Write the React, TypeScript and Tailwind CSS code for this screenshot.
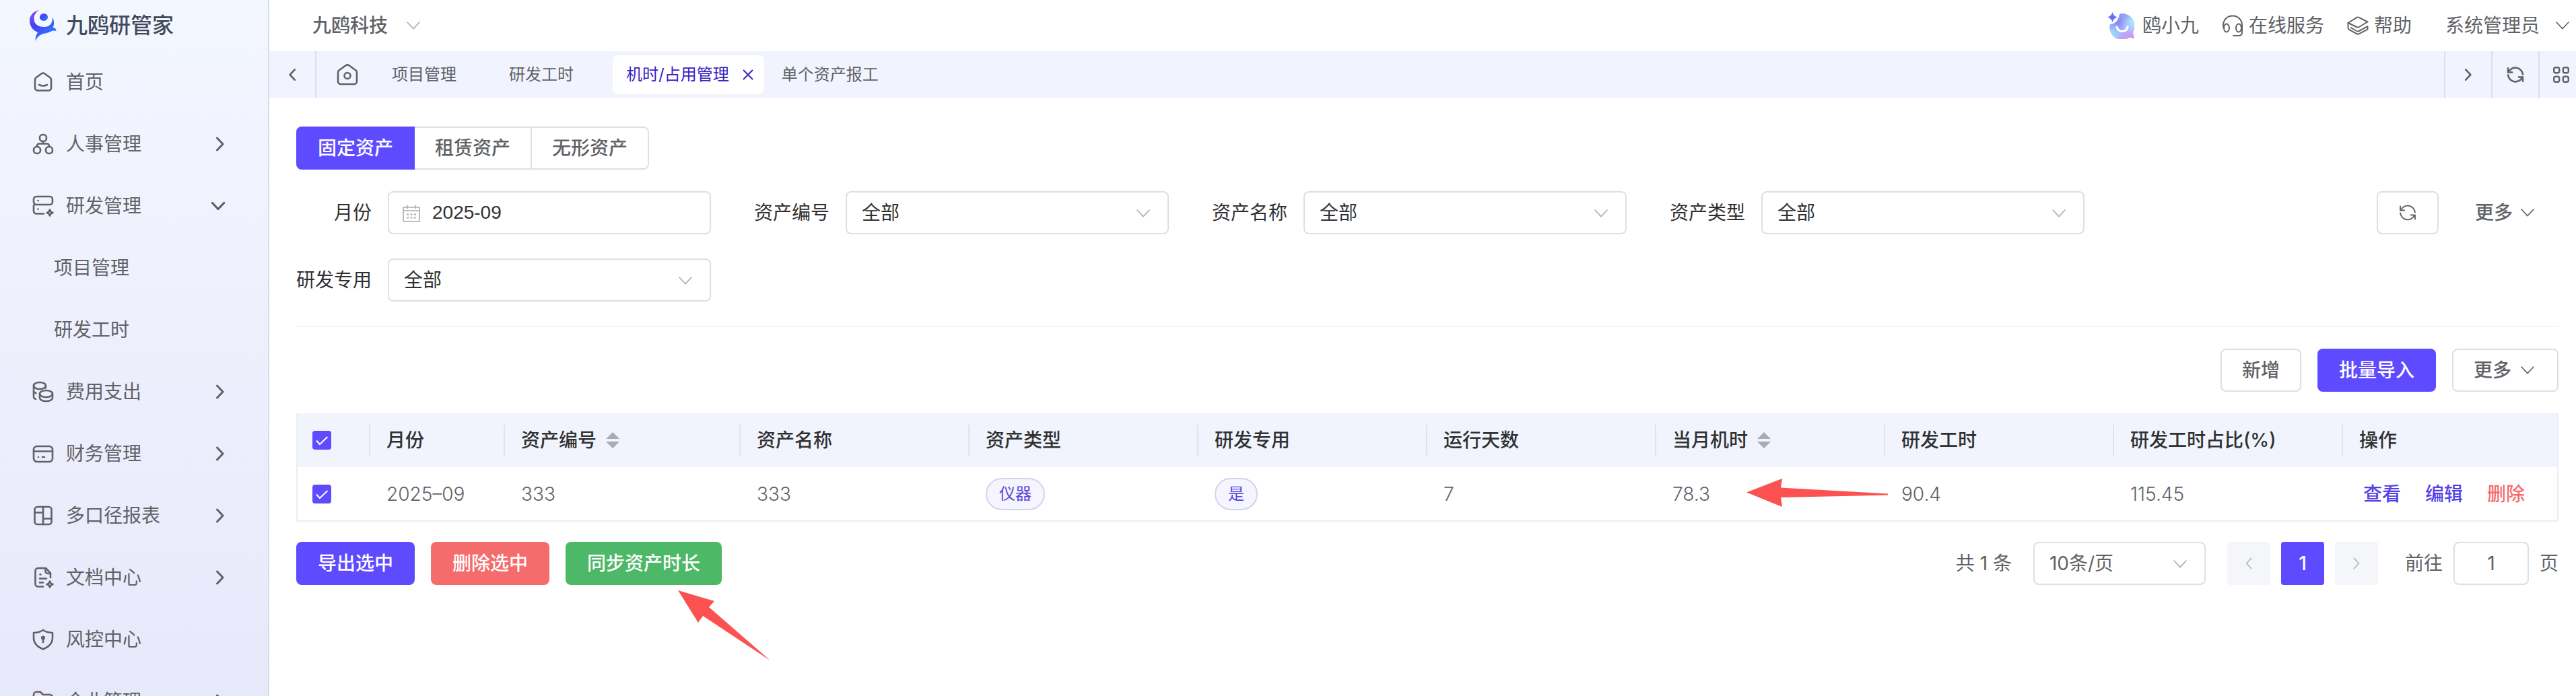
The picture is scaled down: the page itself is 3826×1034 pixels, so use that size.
import { useState, type ReactNode } from "react";

const primaryBtn = "h-16 rounded-lg px-8 text-white";
const plainBtn =
  "flex h-16 items-center rounded-lg border-2 border-[#dcdfe6] bg-white px-[30px]";
const box = "h-16 rounded-lg border-2 border-[#dcdfe6] bg-white text-[#303133]";

function Chevron({ className = "", strong = false }: { className?: string; strong?: boolean }) {
  return (
    <svg
      className={`h-3 w-5 shrink-0 ${className}`}
      viewBox="0 0 20 12"
      fill="none"
      stroke="currentColor"
      strokeWidth={strong ? 3 : 1.6}
      strokeLinecap="round"
      strokeLinejoin="round"
    >
      <path d="M1 1l9 9.6L19 1" />
    </svg>
  );
}

function Side({ left = false, thin = false, className = "" }: { left?: boolean; thin?: boolean; className?: string }) {
  return (
    <svg
      className={`shrink-0 ${className}`}
      viewBox="0 0 14 22"
      fill="none"
      stroke="currentColor"
      strokeWidth={thin ? 1.6 : 3}
      strokeLinecap="round"
      strokeLinejoin="round"
    >
      <path d={left ? "M11.5 2L3 11l8.500 9" : "M2.500 2L11 11l-8.500 9"} />
    </svg>
  );
}

function Icon({ children, className = "size-8", width = 2.6 }: { children: ReactNode; className?: string; width?: number }) {
  return (
    <svg
      className={`shrink-0 ${className}`}
      viewBox="0 0 32 32"
      fill="none"
      stroke="currentColor"
      strokeWidth={width}
      strokeLinecap="round"
      strokeLinejoin="round"
    >
      {children}
    </svg>
  );
}

function Refresh({ className, width }: { className?: string; width?: number }) {
  return (
    <Icon className={className} width={width}>
      <path d="M3.500 5v7h7" />
      <path d="M4.500 11.500A12.600 12.600 0 0 1 28.500 15.500" />
      <path d="M28.500 27v-7h-7" />
      <path d="M27.500 20.500A12.600 12.600 0 0 1 3.500 16.500" />
    </Icon>
  );
}

const icons = {
  home: (
    <Icon>
      <path d="M4 12.500a4 4 0 0 1 1.600-3.200l8.300-6a3.600 3.600 0 0 1 4.200 0l8.300 6a4 4 0 0 1 1.600 3.200V24.500a4 4 0 0 1-4 4H8a4 4 0 0 1-4-4z" />
      <path d="M10 20q6 3 12 0" />
    </Icon>
  ),
  org: (
    <Icon>
      <rect x="11" y="2" width="10" height="10" rx="4.500" />
      <rect x="2" y="20" width="10" height="10" rx="4.500" />
      <rect x="20" y="20" width="10" height="10" rx="4.500" />
      <path d="M16 12v3.500M7 20v-1.500a3 3 0 0 1 3-3h12a3 3 0 0 1 3 3V20" />
    </Icon>
  ),
  research: (
    <Icon>
      <path d="M6 2h20a4 4 0 0 1 4 4v4a4 4 0 0 1-4 4H6a4 4 0 0 1-4-4V6a4 4 0 0 1 4-4z" />
      <path d="M3.500 13.500A4 4 0 0 0 2 17v6.500a4 4 0 0 0 4 4h11" />
      <path d="M8.500 8v.1M8.500 20.500v.1" />
      <path d="M26 21.500q.8 3.700 4.500 4.500-3.700.8-4.500 4.500-.8-3.700-4.500-4.500 3.700-.8 4.500-4.500z" />
    </Icon>
  ),
  coins: (
    <Icon>
      <ellipse cx="11" cy="7" rx="9" ry="5" />
      <path d="M2 7v17q0 1.800 3 3M2 15.500q.8 1.600 3.500 2.600" />
      <ellipse cx="20.500" cy="19" rx="9.500" ry="5" />
      <path d="M11 19v6c0 2.800 4.200 5 9.500 5s9.500-2.200 9.500-5v-6" />
      <path d="M19.500 10.500q.4-1 .5-3" />
    </Icon>
  ),
  card: (
    <Icon>
      <rect x="2" y="5" width="28" height="23" rx="5" />
      <path d="M2 12.500h28M9 21v.1M15 21h3" />
    </Icon>
  ),
  report: (
    <Icon>
      <rect x="3.500" y="3" width="25" height="26" rx="4" />
      <path d="M16 3v26M3.500 11.500H16M16 20.500h12.500" />
    </Icon>
  ),
  doc: (
    <Icon>
      <path d="M16 29.500H8.500a4 4 0 0 1-4-4V6a4 4 0 0 1 4-4h11.500l7 7.500V16" />
      <path d="M19.500 2.500v4a3.500 3.500 0 0 0 3.500 3.500h4M11.500 11.500h1M11 17.500h10M11 23.500h5" />
      <path d="M26 21.500q.8 3.700 4.500 4.500-3.700.8-4.500 4.500-.8-3.700-4.500-4.500 3.700-.8 4.500-4.500z" />
    </Icon>
  ),
  shield: (
    <Icon>
      <path d="M16 2q5.500 4 14 4v8.500Q29.500 25 16 30.500 2.500 25 2 14.500V6q8.500 0 14-4z" />
      <path d="M16 15v5" />
      <circle cx="16" cy="13.500" r="1.800" fill="currentColor" />
    </Icon>
  ),
  folder: (
    <Icon>
      <path d="M2 26V6a4 4 0 0 1 4-4h6l4 4h10a4 4 0 0 1 4 4v16a4 4 0 0 1-4 4H6a4 4 0 0 1-4-4z" />
    </Icon>
  ),
};

type Item = { label: string; icon: keyof typeof icons; arrow?: "right" | "down"; children?: string[] };

const menu: Item[] = [
  { label: "首页", icon: "home" },
  { label: "人事管理", icon: "org", arrow: "right" },
  { label: "研发管理", icon: "research", arrow: "down", children: ["项目管理", "研发工时"] },
  { label: "费用支出", icon: "coins", arrow: "right" },
  { label: "财务管理", icon: "card", arrow: "right" },
  { label: "多口径报表", icon: "report", arrow: "right" },
  { label: "文档中心", icon: "doc", arrow: "right" },
  { label: "风控中心", icon: "shield" },
  { label: "企业管理", icon: "folder", arrow: "right" },
];

function Sidebar() {
  return (
    <aside className="h-full w-[400px] shrink-0 overflow-hidden border-r-2 border-[#d9dce6] bg-linear-to-b from-[#f3f7ff] via-[#eeeffd] to-[#e8e8fb]">
      <div className="flex h-[76px] items-center gap-[14px] pl-[44px] text-[32px] font-medium text-[#414a5c]">
        <svg className="h-[46px] w-10" viewBox="0 0 40 46">
          <defs>
            <linearGradient id="logo" x1="0" y1="0" x2="0.6" y2="1">
              <stop offset="0" stopColor="#8f4df5" />
              <stop offset="0.45" stopColor="#4a3df5" />
              <stop offset="1" stopColor="#2a80fb" />
            </linearGradient>
          </defs>
          <path
            fill="url(#logo)"
            d="M14 0C5 2 0 8 0 16c0 8 5 14 12 17-2 4-4 8-3.500 13 3-7 8-10.500 15-11.500 6-1 9.500-4 12-4l4 .5c0-3-2-5-5-5.500 2-3 2.500-9-.5-15 .5 9-4 14-11 14.500C13 25.500 7 21 6.500 14 6 8 9 3 14 0z"
          />
          <ellipse cx="21" cy="10.500" rx="6" ry="5.600" fill="url(#logo)" />
        </svg>
        九鸥研管家
      </div>
      <nav>
        {menu.map((item) => (
          <div key={item.label}>
            <a href="#" className="flex h-[92px] items-center gap-[18px] pr-16 pl-12">
              {icons[item.icon]}
              <span className="flex-1">{item.label}</span>
              {item.arrow === "right" && <Side className="h-[22px] w-[14px]" />}
              {item.arrow === "down" && <Chevron strong />}
            </a>
            {item.children?.map((child) => (
              <a key={child} href="#" className="flex h-[92px] items-center pl-20">
                {child}
              </a>
            ))}
          </div>
        ))}
      </nav>
    </aside>
  );
}

function Header() {
  return (
    <header className="flex h-[76px] items-center justify-between pr-[10px] pl-16">
      <button className="flex items-center gap-7 font-medium">
        九鸥科技
        <Chevron className="text-[#a8abb2]" />
      </button>
      <div className="flex items-center gap-[34px]">
        <a href="#" className="flex items-center gap-3">
          <svg className="size-10" viewBox="0 0 40 40">
            <defs>
              <linearGradient id="bot" x1="0.1" y1="0" x2="0.8" y2="1">
                <stop offset="0" stopColor="#8fb4ff" />
                <stop offset="0.35" stopColor="#8f86f5" />
                <stop offset="0.65" stopColor="#a5b4fb" />
                <stop offset="1" stopColor="#e08af0" />
              </linearGradient>
              <radialGradient id="glow" cx="0.95" cy="0.3" r="0.55">
                <stop offset="0" stopColor="#a8ecff" />
                <stop offset="1" stopColor="#a8ecff" stopOpacity="0" />
              </radialGradient>
              <radialGradient id="glowLeft" cx="0.05" cy="0.75" r="0.45">
                <stop offset="0" stopColor="#9fe6ff" />
                <stop offset="1" stopColor="#9fe6ff" stopOpacity="0" />
              </radialGradient>
            </defs>
            {["url(#bot)", "url(#glow)", "url(#glowLeft)"].map((fill) => (
              <path key={fill} fill={fill} d="M18 2.500A18.500 18.500 0 0 1 38 30l2 9.500-7-2A18.500 18.500 0 0 1 4 18q12-1 14-15.500z" />
            ))}
            <path fill="#6a70f5" d="M7.500 0q1.500 6 7.500 7.500-6 1.500-7.500 7.500Q6 9 0 7.500 6 6 7.500 0z" />
            <path d="M14 22q1.500 6.500 8 6.500t8-6.500" fill="none" stroke="#fff" strokeWidth="3.200" strokeLinecap="round" />
          </svg>
          鸥小九
        </a>
        <a href="#" className="flex items-center gap-2">
          <Icon width={2}>
            <path d="M2 18v-2.500C2 7.500 8 1.500 16 1.500s14 6 14 14V26c0 3-2 5-5 5h-8" />
            <ellipse cx="7" cy="19.500" rx="4" ry="6" />
            <ellipse cx="25" cy="19.500" rx="4" ry="6" />
          </Icon>
          在线服务
        </a>
        <a href="#" className="flex items-center gap-2">
          <Icon width={2}>
            <path d="M1.500 12L14 4.200q2-1.200 4 0l12.500 6.300L17 18.500q-1 .6-2 0z" />
            <path d="M1.500 12v7.500q0 1.500 1.500 2.400l11 6.300q2 1.200 4 0l12.500-6.500v-4.500L17 24.500q-1 .6-2 0L5.500 19" />
          </Icon>
          帮助
        </a>
        <button className="ml-4 flex items-center gap-6">
          系统管理员
          <Chevron />
        </button>
      </div>
    </header>
  );
}

function TabBar() {
  const [active, setActive] = useState("机时/占用管理");
  return (
    <div className="flex h-[70px] items-center bg-[#f1f4fe] text-2xl">
      <button aria-label="向左" className="flex h-full w-[70px] items-center justify-center border-r-2 border-[#dcdfea]">
        <Side left className="h-5 w-3" />
      </button>
      <button aria-label="首页" className="mx-[30px]">
        <Icon>
          <path d="M2 12.500a4 4 0 0 1 1.400-3L13.500 2.300a4 4 0 0 1 5 0L28.600 9.500a4 4 0 0 1 1.400 3V26a4 4 0 0 1-4 4H6a4 4 0 0 1-4-4z" />
          <circle cx="16" cy="17.500" r="4.500" />
        </Icon>
      </button>
      <div className="flex flex-1 gap-[6px]">
        {["项目管理", "研发工时", "机时/占用管理", "单个资产报工"].map((tab) => (
          <div
            key={tab}
            className={`flex h-[58px] items-center gap-5 rounded-lg pr-4 pl-5 ${active === tab ? "bg-white text-[#3a22c4]" : ""}`}
          >
            <button onClick={() => setActive(tab)}>{tab}</button>
            <button aria-label={`关闭${tab}`} className={active === tab ? "" : "invisible"}>
              <svg className="size-4" viewBox="0 0 16 16" stroke="currentColor" strokeWidth="2">
                <path d="M1 1l14 14M15 1L1 15" />
              </svg>
            </button>
          </div>
        ))}
      </div>
      <button aria-label="向右" className="flex h-full w-[70px] items-center justify-center border-l-2 border-[#dcdfea]">
        <Side className="h-5 w-3" />
      </button>
      <button aria-label="刷新" className="flex h-full w-[70px] items-center justify-center border-l-2 border-[#dcdfea]">
        <Refresh className="size-7" width={3} />
      </button>
      <button aria-label="布局" className="flex h-full w-14 items-center border-l-2 border-[#dcdfea] pl-5">
        <svg className="size-6" viewBox="0 0 24 24" fill="none" stroke="currentColor" strokeWidth="2.400">
          <rect x="1.200" y="1.200" width="8" height="8" rx="2.500" />
          <rect x="14.800" y="1.200" width="8" height="8" rx="2.500" />
          <rect x="1.200" y="14.800" width="8" height="8" rx="2.500" />
          <rect x="14.800" y="14.800" width="8" height="8" rx="2.500" />
        </svg>
      </button>
    </div>
  );
}

function Field({ id, label, children }: { id: string; label: string; children: ReactNode }) {
  return (
    <div className="flex items-center gap-6">
      <label htmlFor={id} className="w-28 text-right text-[#303133]">
        {label}
      </label>
      <div className="relative w-[480px]">{children}</div>
    </div>
  );
}

function SelectField({ id, label }: { id: string; label: string }) {
  return (
    <Field id={id} label={label}>
      <select id={id} className={`${box} w-full appearance-none px-[22px]`}>
        <option>全部</option>
      </select>
      <Chevron className="pointer-events-none absolute top-[27px] right-7 text-[#a8abb2]" />
    </Field>
  );
}

function Filters() {
  return (
    <form className="flex items-start justify-between">
      <div className="flex flex-1 flex-wrap gap-x-16 gap-y-9">
        <Field id="month" label="月份">
          <input
            id="month"
            defaultValue="2025-09"
            className={`${box} w-full pr-6 pl-[64px] font-['Liberation_Sans',sans-serif]`}
          />
          <svg
            className="pointer-events-none absolute top-5 left-[22px] size-[26px] text-[#a8abb2]"
            viewBox="0 0 26 26"
            fill="none"
            stroke="currentColor"
            strokeWidth="1.600"
          >
            <path d="M1 4h24v21H1zM1 9h24M7 1v5M19 1v5" />
            <path d="M6 14.500h14M6 19.500h14" strokeDasharray="3 2.500" strokeWidth="2" />
          </svg>
        </Field>
        <SelectField id="code" label="资产编号" />
        <SelectField id="name" label="资产名称" />
        <SelectField id="type" label="资产类型" />
        <SelectField id="dedicated" label="研发专用" />
      </div>
      <div className="flex gap-[22px]">
        <button type="button" aria-label="重置" className={plainBtn}>
          <Refresh className="size-7" width={2.2} />
        </button>
        <button type="button" className="flex h-16 items-center gap-3 px-8 font-medium">
          更多
          <Chevron className="mr-1" />
        </button>
      </div>
    </form>
  );
}

function Check({ label }: { label: string }) {
  return (
    <label className="relative block size-7">
      <input type="checkbox" defaultChecked aria-label={label} className="block size-7 appearance-none rounded bg-[#5f4bff]" />
      <svg className="pointer-events-none absolute inset-0" viewBox="0 0 28 28" fill="none" stroke="#fff" strokeWidth="2">
        <path d="M6 14.500l5 5.500L22.500 9" />
      </svg>
    </label>
  );
}

function Tag({ children }: { children: ReactNode }) {
  return (
    <span className="inline-flex h-12 items-center rounded-full border-2 border-[#d5d2ea] bg-[#f5f5ff] px-[18px] text-2xl text-[#5a43dc]">
      {children}
    </span>
  );
}

const columns = [
  { title: "月份", width: "w-[200px]" },
  { title: "资产编号", width: "w-[350px]", sort: true },
  { title: "资产名称", width: "w-[340px]" },
  { title: "资产类型", width: "w-[340px]" },
  { title: "研发专用", width: "w-[340px]" },
  { title: "运行天数", width: "w-[340px]" },
  { title: "当月机时", width: "w-[340px]", sort: true },
  { title: "研发工时", width: "w-[340px]" },
  { title: "研发工时占比(%)", width: "w-[340px]" },
  { title: "操作", width: "" },
];

function AssetTable() {
  return (
    <div className="mt-8 border-x-2 border-b-2 border-[#ebedf2]">
      <table className="w-full table-fixed text-left">
        <thead className="bg-[#f1f4fc] text-[#303133]">
          <tr className="h-20">
            <th className="w-[108px] p-0">
              <div className="flex h-[46px] items-center border-r-2 border-[#dfe3ec] pl-[22px]">
                <Check label="全选" />
              </div>
            </th>
            {columns.map((col, i) => (
              <th key={col.title} className={`${col.width} p-0 font-medium`}>
                <div
                  className={`flex h-[46px] items-center gap-[14px] pl-6 ${i < columns.length - 1 ? "border-r-2 border-[#dfe3ec]" : ""}`}
                >
                  {col.title}
                  {col.sort && (
                    <svg className="h-6 w-5" viewBox="0 0 20 24" fill="#a8abb2">
                      <path d="M10 0l10 10H0zM10 24L0 14h20z" />
                    </svg>
                  )}
                </div>
              </th>
            ))}
          </tr>
        </thead>
        <tbody>
          <tr className="h-[79px] *:py-0">
            <td className="pl-[22px]">
              <Check label="选择 2025-09" />
            </td>
            <td className="pl-6 font-light">2025–09</td>
            <td className="pl-6 font-light">333</td>
            <td className="pl-6 font-light">333</td>
            <td className="pl-6">
              <Tag>仪器</Tag>
            </td>
            <td className="pl-6">
              <Tag>是</Tag>
            </td>
            <td className="pl-6 font-light">7</td>
            <td className="relative pl-6 font-light">
              78.3
              <svg className="absolute top-[17px] left-[134px] h-[42px] w-[210px]" viewBox="0 0 210 42" fill="#fb5151">
                <path d="M0 20.500L53 0l-2 13.500 159 9v2L51 28l2 14z" />
              </svg>
            </td>
            <td className="pl-6 font-light">90.4</td>
            <td className="pl-6 font-light">115.45</td>
            <td className="pl-[30px]">
              <div className="flex gap-9 font-medium text-[#5540e8]">
                <a href="#">查看</a>
                <a href="#">编辑</a>
                <a href="#" className="text-[#f56c6c]">
                  删除
                </a>
              </div>
            </td>
          </tr>
        </tbody>
      </table>
    </div>
  );
}

function Pagination() {
  return (
    <div className="flex items-center">
      <span className="mr-8">共 1 条</span>
      <div className="relative mr-8 w-64">
        <select aria-label="每页条数" className="h-16 w-full appearance-none rounded-lg border-2 border-[#dcdfe6] bg-white px-[22px]">
          <option>10条/页</option>
        </select>
        <Chevron className="pointer-events-none absolute top-[27px] right-7 text-[#a8abb2]" />
      </div>
      <div className="mr-10 flex gap-4">
        <button aria-label="上一页" className="flex size-16 items-center justify-center rounded bg-[#f5f6fa] text-[#a8abb2]">
          <Side left thin className="h-5 w-3" />
        </button>
        <button className="size-16 rounded bg-[#5f4bff] font-medium text-white">1</button>
        <button aria-label="下一页" className="flex size-16 items-center justify-center rounded bg-[#f5f6fa] text-[#a8abb2]">
          <Side thin className="h-5 w-3" />
        </button>
      </div>
      <label className="flex items-center gap-4">
        前往
        <input defaultValue="1" className="h-16 w-28 rounded-lg border-2 border-[#dcdfe6] text-center" />
        页
      </label>
    </div>
  );
}

export default function App() {
  return (
    <div className="flex h-screen overflow-hidden bg-white font-[Inter,'Noto_Sans_CJK_SC',sans-serif] text-[28px] leading-10 text-[#606266]">
      <Sidebar />
      <main className="min-w-0 flex-1">
        <Header />
        <TabBar />
        <section className="pt-[42px] pr-[26px] pl-10">
          <div className="mb-8 flex font-medium">
            <button className="h-16 rounded-l-lg bg-[#5f4bff] px-8 text-white">固定资产</button>
            <button className="h-16 border-y-2 border-r-2 border-[#dcdfe6] px-[30px]">租赁资产</button>
            <button className="h-16 rounded-r-lg border-y-2 border-r-2 border-[#dcdfe6] px-[30px]">无形资产</button>
          </div>
          <Filters />
          <hr className="mt-9 mb-8 border-t-2 border-[#f3f4f7]" />
          <div className="flex justify-end gap-6 font-medium">
            <button className={plainBtn}>新增</button>
            <button className={`${primaryBtn} bg-[#5f4bff]`}>批量导入</button>
            <button className={`${plainBtn} gap-[14px]`}>
              更多
              <Chevron className="mr-1" />
            </button>
          </div>
          <AssetTable />
          <div className="mt-[30px] flex items-start justify-between">
            <div className="flex gap-6 font-medium">
              <button className={`${primaryBtn} bg-[#5f4bff]`}>导出选中</button>
              <button className={`${primaryBtn} bg-[#f56c6c]`}>删除选中</button>
              <div className="relative">
                <button className={`${primaryBtn} bg-[#4db868]`}>同步资产时长</button>
                <svg className="absolute top-[72px] left-[167px] h-[103px] w-[135px]" viewBox="0 0 135 103" fill="#fb5151">
                  <path d="M0 0l54 16-8 9 89 77.500V103L37 38l-7 10z" />
                </svg>
              </div>
            </div>
            <Pagination />
          </div>
        </section>
      </main>
    </div>
  );
}
